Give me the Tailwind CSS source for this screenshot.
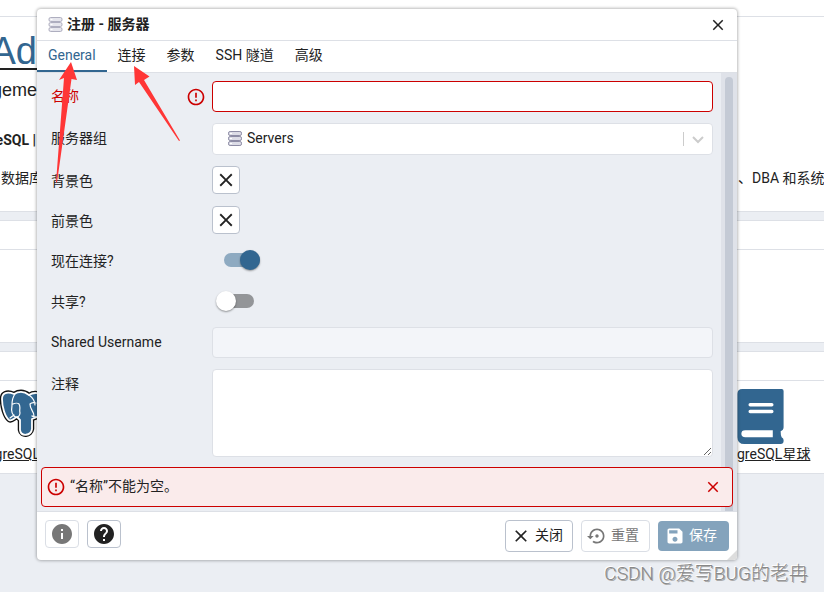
<!DOCTYPE html>
<html lang="zh-CN">
<head>
<meta charset="utf-8">
<meta name="viewport" content="width=device-width, initial-scale=1">
<title>注册 - 服务器</title>
<script src="https://cdn.jsdelivr.net/npm/@tailwindcss/browser@4"></script>
</head>
<body class="relative min-h-screen overflow-hidden bg-[#ebeef3] font-[Roboto,'Noto_Sans_CJK_SC',sans-serif] text-sm leading-5 text-[#222]">
<svg class="hidden">
  <symbol id="servers" viewBox="0 0 14 16">
    <g fill="#dcdce6" stroke="#8d8ca5" stroke-width="1">
      <rect x="0.5" y="0.5" width="13" height="4" rx="1.6"/>
      <rect x="0.5" y="5.500" width="13" height="4" rx="1.6"/>
      <rect x="0.5" y="10.500" width="13" height="4" rx="1.6"/>
    </g>
    <path d="M2 2.500h2M2 7.500h2M2 12.500h2" stroke="#fff"/>
  </symbol>
  <symbol id="close" viewBox="0 0 24 24"><path fill="currentColor" d="M19 6.410 17.590 5 12 10.590 6.410 5 5 6.410 10.590 12 5 17.590 6.410 19 12 13.410 17.590 19 19 17.590 13.410 12z"/></symbol>
  <symbol id="error" viewBox="0 0 24 24"><path fill="currentColor" d="M11 15h2v2h-2zm0-8h2v6h-2zm.99-5C6.470 2 2 6.480 2 12s4.470 10 9.990 10C17.520 22 22 17.520 22 12S17.520 2 11.990 2zM12 20c-4.420 0-8-3.580-8-8s3.580-8 8-8 8 3.580 8 8-3.580 8-8 8z"/></symbol>
</svg>

<main class="whitespace-nowrap">
  <div class="h-4 bg-white"></div>
  <section class="flex h-[196px] justify-between border-y border-[#dde0e6] bg-white">
    <div class="flex w-[37px] flex-col items-end overflow-hidden">
      <div class="flex h-[53px] w-full items-end justify-end border-b-2 border-[#222] font-['Liberation_Sans',sans-serif] text-[38px] leading-[34px] text-[#326690]">Ad</div>
      <p class="mt-2 font-['Liberation_Sans',sans-serif] text-lg leading-6">geme</p>
      <p class="mt-7 pr-px font-bold">eSQL |</p>
      <p class="mt-[18px] w-full pl-px">数据库</p>
    </div>
    <p class="w-[86px] overflow-hidden pt-[151px]">、DBA 和系统</p>
  </section>
  <section class="mt-2 h-[123px] border-y border-[#dde0e6] bg-white"><div class="h-[29px] border-b border-[#dde0e6]"></div></section>
  <section class="mt-2 h-[123px] border-y border-[#dde0e6] bg-white">
    <div class="h-[29px] border-b border-[#dde0e6]"></div>
    <div class="flex justify-between pt-2">
      <a href="#" class="flex w-10 flex-col underline">
        <svg class="h-[55px] w-[37px]" viewBox="0 0 37 55" stroke-linejoin="round" stroke-linecap="round">
          <path fill="#111" stroke="#111" stroke-width="4.500" d="M14 5C7 2 2 4 2 10c0 8 3 18 7 21 3 2 5-2 8-3l3 3v10c1 7 11 6 12-1V30l8-3V5c-5-2-8-1-11 1-5-4-10-4-15-1Z"/>
          <path fill="#336791" stroke="#fff" stroke-width="1.800" d="M14 5C7 2 2 4 2 10c0 8 3 18 7 21 3 2 5-2 8-3l3 3v10c1 7 11 6 12-1V30l8-3V5c-5-2-8-1-11 1-5-4-10-4-15-1Z"/>
          <path fill="none" stroke="#fff" stroke-width="1.200" d="M15 5c-3 4-3 7-3 11 0 5-2 7 2 11 3 3 6 0 6-3-1-3 1-6-1-9-1-1-4-1-6 0M29 6c4 3 6 6 6 10M36 14c-4-1-5 0-6 1 0 6 4 7 4 12M32 27c1 1 3 1 5 1M10 29l4-3"/>
        </svg>
        <span class="flex justify-end">greSQL</span>
      </a>
      <a href="#" class="w-[87px] overflow-hidden underline">
        <svg class="h-[55px] w-12" viewBox="0 0 48 56"><path fill="#326690" d="M5 0h40q2 0 2 2v37q0 3-3 4 0 4 1 6 2 1 2 3v1q0 3-3 3H7q-7 0-7-7V5q0-5 5-5Z"/><path stroke="#fff" stroke-width="3.500" stroke-linecap="round" d="M13 16h22M13 23h22"/><path fill="#fff" d="M8 42h28v7H8q-4 0-4-3.500T8 42Z"/></svg>
        <span class="block">greSQL星球</span>
      </a>
    </div>
  </section>
</main>

<div role="dialog" aria-labelledby="title" class="absolute top-[9px] right-[87px] left-[37px] overflow-hidden rounded bg-white shadow-[0_0_3px_1px_#0004]">
  <header class="flex h-8 items-center border-b border-[#dde0e6] pr-[10px] pl-[11px]">
    <svg class="mr-1 h-4 w-[15px] opacity-70"><use href="#servers"/></svg>
    <h1 id="title" class="pb-0.5 font-bold">注册 - 服务器</h1>
    <button aria-label="关闭窗口" class="ml-auto"><svg class="size-[18px]"><use href="#close"/></svg></button>
  </header>
  <nav role="tablist" class="flex h-8 gap-px border-b border-[#dde0e6]">
    <button role="tab" aria-selected="true" class="border-b-2 border-[#326690] px-[11px] pb-0.5 text-[#326690]">General</button>
    <button role="tab" class="px-[10px] pb-1">连接</button>
    <button role="tab" class="px-[10px] pb-1">参数</button>
    <button role="tab" class="px-[10px] pb-1">SSH 隧道</button>
    <button role="tab" class="px-[10px] pb-1">高级</button>
  </nav>
  <div class="relative flex bg-[#ebeef3]">
    <form class="grid flex-1 grid-cols-[161px_1fr] items-center gap-y-[11px] pt-2 pr-2 pb-[54px] pl-[14px]">
      <label for="name" class="flex items-center justify-between pr-[6px] text-[#c00]"><span class="pb-0.5">名称</span><svg class="size-5"><use href="#error"/></svg></label>
      <input id="name" class="h-[31px] w-full rounded border border-[#c00] bg-white px-3">
      <label for="group" class="pb-0.5">服务器组</label>
      <div class="relative flex h-8 items-center">
        <select id="group" class="h-full w-full appearance-none rounded border border-[#dde0e6] bg-white pb-0.5 pl-[34px]"><option>Servers</option></select>
        <svg class="pointer-events-none absolute left-4 h-4 w-[14px]"><use href="#servers"/></svg>
        <span class="pointer-events-none absolute right-[29px] h-[14px] w-px bg-[#ccc]"></span>
        <svg class="pointer-events-none absolute right-2 size-[14px]" viewBox="0 0 14 14" fill="none" stroke="#ccc" stroke-width="2"><path d="m2 5 5 5 5-5"/></svg>
      </div>
      <label for="bg">背景色</label>
      <div class="h-[29px]"><button type="button" id="bg" aria-label="背景色" class="flex size-7 items-center justify-center rounded border border-[#bac1cd] bg-white"><svg class="size-[22px]"><use href="#close"/></svg></button></div>
      <label for="fg">前景色</label>
      <div class="h-[29px]"><button type="button" id="fg" aria-label="前景色" class="flex size-7 items-center justify-center rounded border border-[#bac1cd] bg-white"><svg class="size-[22px]"><use href="#close"/></svg></button></div>
      <label for="now">现在连接?</label>
      <div class="flex h-[30px] items-center pb-0.5 pl-3">
        <input id="now" type="checkbox" role="switch" checked class="flex h-[14px] w-9 appearance-none items-center rounded-full bg-[#326690]/50 before:ml-auto before:size-5 before:shrink-0 before:rounded-full before:bg-[#326690] before:shadow-[0_1px_2px_#0006]">
      </div>
      <label for="share">共享?</label>
      <div class="flex h-[29px] items-center pb-0.5 pl-1">
        <input id="share" type="checkbox" role="switch" class="flex h-[14px] w-[38px] appearance-none items-center rounded-full bg-[linear-gradient(90deg,transparent_9px,#939598_9px)] before:size-5 before:shrink-0 before:rounded-full before:bg-white before:shadow-[0_1px_2px_#0006]">
      </div>
      <label for="user" class="pb-0.5">Shared Username</label>
      <input id="user" disabled class="h-[31px] w-full rounded border border-[#dde0e6] bg-[#f3f5f9] px-3">
      <label for="note" class="self-start pt-[5px]">注释</label>
      <textarea id="note" class="block h-[88px] w-full rounded border border-[#dde0e6] bg-white px-3"></textarea>
    </form>
    <div class="w-4 bg-[#dfe2e9] px-1 pt-1"><div class="h-full rounded-t-full bg-[#c4cad5]"></div></div>
    <div role="alert" class="absolute inset-x-1 bottom-1 flex h-10 items-center rounded border border-[#c00] bg-[#faebeb] pr-[10px] pl-1">
      <svg class="mr-1 size-5 text-[#c00]"><use href="#error"/></svg>
      <span class="pb-0.5">“名称”不能为空。</span>
      <button aria-label="关闭提示" class="ml-auto text-[#c00]"><svg class="size-[18px]"><use href="#close"/></svg></button>
    </div>
  </div>
  <footer class="relative flex h-[49px] items-start border-t border-[#dde0e6] px-2 pt-2">
    <button disabled aria-label="信息" class="mr-2 flex h-7 w-[34px] items-center justify-center rounded border border-[#dadee5]"><svg class="size-6" viewBox="0 0 24 24"><path fill="#777" d="M12 2C6.480 2 2 6.480 2 12s4.480 10 10 10 10-4.480 10-10S17.520 2 12 2zm1 15h-2v-6h2v6zm0-8h-2V7h2v2z"/></svg></button>
    <button aria-label="帮助" class="flex h-7 w-[34px] items-center justify-center rounded border border-[#bac1cd]"><svg class="size-6" viewBox="0 0 24 24"><path fill="#222" d="M12 2C6.480 2 2 6.480 2 12s4.480 10 10 10 10-4.480 10-10S17.520 2 12 2zm1 17h-2v-2h2v2zm2.070-7.750-.9.920C13.450 12.900 13 13.500 13 15h-2v-.5c0-1.100.45-2.100 1.170-2.830l1.240-1.260c.37-.36.59-.86.59-1.410 0-1.100-.9-2-2-2s-2 .9-2 2H8c0-2.210 1.790-4 4-4s4 1.790 4 4c0 .88-.36 1.680-.93 2.250z"/></svg></button>
    <div class="ml-auto flex items-center gap-2">
      <button class="flex h-8 items-center gap-1 rounded border border-[#bac1cd] pr-[9px] pl-[5px]"><svg class="size-5"><use href="#close"/></svg><span class="pb-0.5">关闭</span></button>
      <button disabled class="flex h-8 items-center gap-1 rounded border border-[#dadee5] pr-[10px] pl-[5px] text-[#777]"><svg class="size-5" viewBox="0 0 24 24" fill="currentColor"><path d="M14 12c0-1.100-.9-2-2-2s-2 .9-2 2 .9 2 2 2 2-.9 2-2zm-2-9c-4.970 0-9 4.030-9 9H0l4 4 4-4H5c0-3.870 3.130-7 7-7s7 3.130 7 7-3.130 7-7 7c-1.510 0-2.910-.49-4.060-1.300l-1.420 1.440C8.040 20.300 9.940 21 12 21c4.970 0 9-4.030 9-9s-4.030-9-9-9z"/></svg><span class="pb-0.5">重置</span></button>
      <button disabled class="flex h-[30px] items-center gap-1 rounded bg-[#84a3bc] pr-[12px] pl-[7px] text-white"><svg class="size-5" viewBox="0 0 24 24" fill="currentColor"><path d="M17 3H5c-1.110 0-2 .9-2 2v14c0 1.100.89 2 2 2h14c1.100 0 2-.9 2-2V7l-4-4zm-5 16c-1.660 0-3-1.340-3-3s1.340-3 3-3 3 1.340 3 3-1.340 3-3 3zm3-10H5V5h10v4z"/></svg><span class="pb-0.5">保存</span></button>
    </div>
    <svg class="absolute right-0 bottom-0 size-[10px]" viewBox="0 0 10 10"><path fill="#ddd" d="M10 0v10H0z"/></svg>
  </footer>
</div>

<svg class="pointer-events-none absolute top-[60px] left-[50px] h-[130px] w-[140px]" viewBox="50 60 140 130" fill="#ff3636">
  <path d="m71 62 6 18-5.500-1L57 182.500h-1L64 78l-5 2z"/>
  <path d="m134 66 15.500 10.500-5.500 3.500 36 60.500-1 .5-40-59-4 3z"/>
</svg>
<p class="absolute right-4 bottom-1.5 text-[19px] leading-6 font-light text-[#888] [text-shadow:-1px_-1px_0_#fff,1px_1px_0_#aaa]">CSDN @爱写BUG的老冉</p>
</body>
</html>
